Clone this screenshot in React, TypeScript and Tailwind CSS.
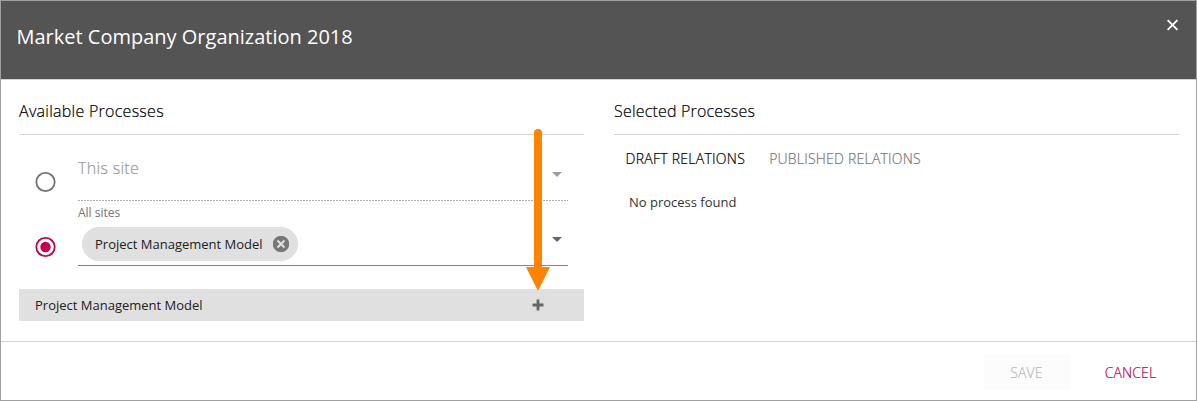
import React from "react";

function Caret({ className }: { className: string }) {
  return (
    <svg width="10" height="5" viewBox="0 0 10 5" className={className}>
      <path d="M0 0h10L5 5z" fill="currentColor" />
    </svg>
  );
}

function Radio({ checked }: { checked?: boolean }) {
  const color = checked ? "#c2004f" : "#737373";
  return (
    <svg width="22" height="22" viewBox="0 0 22 22" className="shrink-0">
      <circle cx="11.5" cy="11" r="9.2" fill="none" stroke={color} strokeWidth="1.8" />
      {checked && <circle cx="11.5" cy="11" r="5.2" fill={color} />}
    </svg>
  );
}

function Header() {
  return (
    <header className="flex h-[79px] shrink-0 items-start justify-between border-b border-[#d3d3d3] bg-[#545454] pl-[15.5px] pr-[17px] text-white">
      <h1 className="mt-[22px] text-[20px] leading-7">Market Company Organization 2018</h1>
      <button aria-label="Close" className="mt-[18px]">
        <svg width="12" height="12" viewBox="0 0 12 12" className="block">
          <path d="M.6 1.1l9.8 9.8M10.4 1.1L.6 10.9" stroke="currentColor" strokeWidth="1.9" />
        </svg>
      </button>
    </header>
  );
}

function Available() {
  return (
    <section className="relative w-[565px]">
      <h2 className="h-[55px] border-b border-[#d3d3d3] pt-[19px] text-[16px] font-light leading-6 tracking-[0.27px] text-black [-webkit-text-stroke:0.2px]">
        Available Processes
      </h2>
      <div className="flex h-[66px] pl-[15px] pr-4">
        <div className="w-11 pt-9"><Radio /></div>
        <div className="flex flex-1 flex-col">
          <div className="flex flex-1 items-start justify-between pr-[6px]">
            <span className="pt-[21px] text-[16px] font-light leading-6 tracking-[0.32px] text-[#999] [-webkit-text-stroke:0.2px]">This site</span>
            <Caret className="mt-[37px] text-[#9e9e9e]" />
          </div>
          <svg width="490" height="1" className="block">
            <path d="M0 .5H490" stroke="#b0b0b0" strokeDasharray="2 1" />
          </svg>
        </div>
      </div>
      <div className="flex h-[65px] pl-[15px] pr-4">
        <div className="w-11 pt-[35px]"><Radio checked /></div>
        <div className="flex flex-1 justify-between border-b border-[#858585] pr-[6px]">
          <div>
            <div className="h-[26px] pt-1 text-[12px] leading-4 text-[#757575]">All sites</div>
            <div className="ml-1 flex h-[34px] w-[216px] items-center justify-between rounded-full bg-[#e0e0e0] pl-[13px] pr-[9px]">
              <span className="text-[13px] leading-5 text-[#212121]">Project Management Model</span>
              <svg width="16" height="16" viewBox="0 0 16 16">
                <circle cx="8" cy="8" r="8.2" fill="#777" />
                <path d="M4.5 4.5l7 7M11.5 4.5l-7 7" stroke="#e0e0e0" strokeWidth="2" />
              </svg>
            </div>
          </div>
          <Caret className="mt-9 text-[#666]" />
        </div>
      </div>
      <div className="mt-[23px] flex h-8 items-center justify-between bg-[#e0e0e0] pl-4 pr-10">
        <span className="text-[13px] leading-5 text-[#212121]">Project Management Model</span>
        <svg width="12" height="12" viewBox="0 0 12 12">
          <path d="M6 .5v11M.5 6h11" stroke="#666" strokeWidth="2.8" />
        </svg>
      </div>
      <svg width="26" height="164" viewBox="0 0 26 164" className="absolute left-[506px] top-[48px]">
        <path d="M13 5v136" stroke="#ff8200" strokeWidth="8" strokeLinecap="round" />
        <path d="M1 139h24L13 163z" fill="#ff8200" />
      </svg>
    </section>
  );
}

function Selected() {
  return (
    <section className="w-[565px]">
      <h2 className="h-[55px] border-b border-[#d3d3d3] pt-[19px] text-[16px] font-light leading-6 tracking-[0.18px] text-black [-webkit-text-stroke:0.2px]">
        Selected Processes
      </h2>
      <nav className="flex gap-6 pl-[11.5px] pt-[14px] text-[14px] font-light leading-5 [-webkit-text-stroke:0.2px]">
        <span className="tracking-[0.27px] text-black">DRAFT RELATIONS</span>
        <span className="tracking-[0.22px] text-[#777]">PUBLISHED RELATIONS</span>
      </nav>
      <p className="pl-[15px] pt-[23px] text-[13px] leading-5 text-[#333]">No process found</p>
    </section>
  );
}

export default function App() {
  return (
    <div className="flex h-[401px] w-[1197px] flex-col border border-[#a0a0a0] bg-white font-['Open_Sans',sans-serif]">
      <Header />
      <main className="flex flex-1 gap-[30px] pl-[18px]">
        <Available />
        <Selected />
      </main>
      <footer className="flex h-[59px] shrink-0 justify-end border-t border-[#d3d3d3] pr-[22px] pt-3 text-[14px] font-light [-webkit-text-stroke:0.2px]">
        <button disabled className="h-9 w-[88px] bg-[#fcfcfc] pr-px tracking-[0.1px] text-[#bbb]">SAVE</button>
        <button className="ml-4 h-9 w-[87px] tracking-[0.15px] text-[#c2004f]">CANCEL</button>
      </footer>
    </div>
  );
}
